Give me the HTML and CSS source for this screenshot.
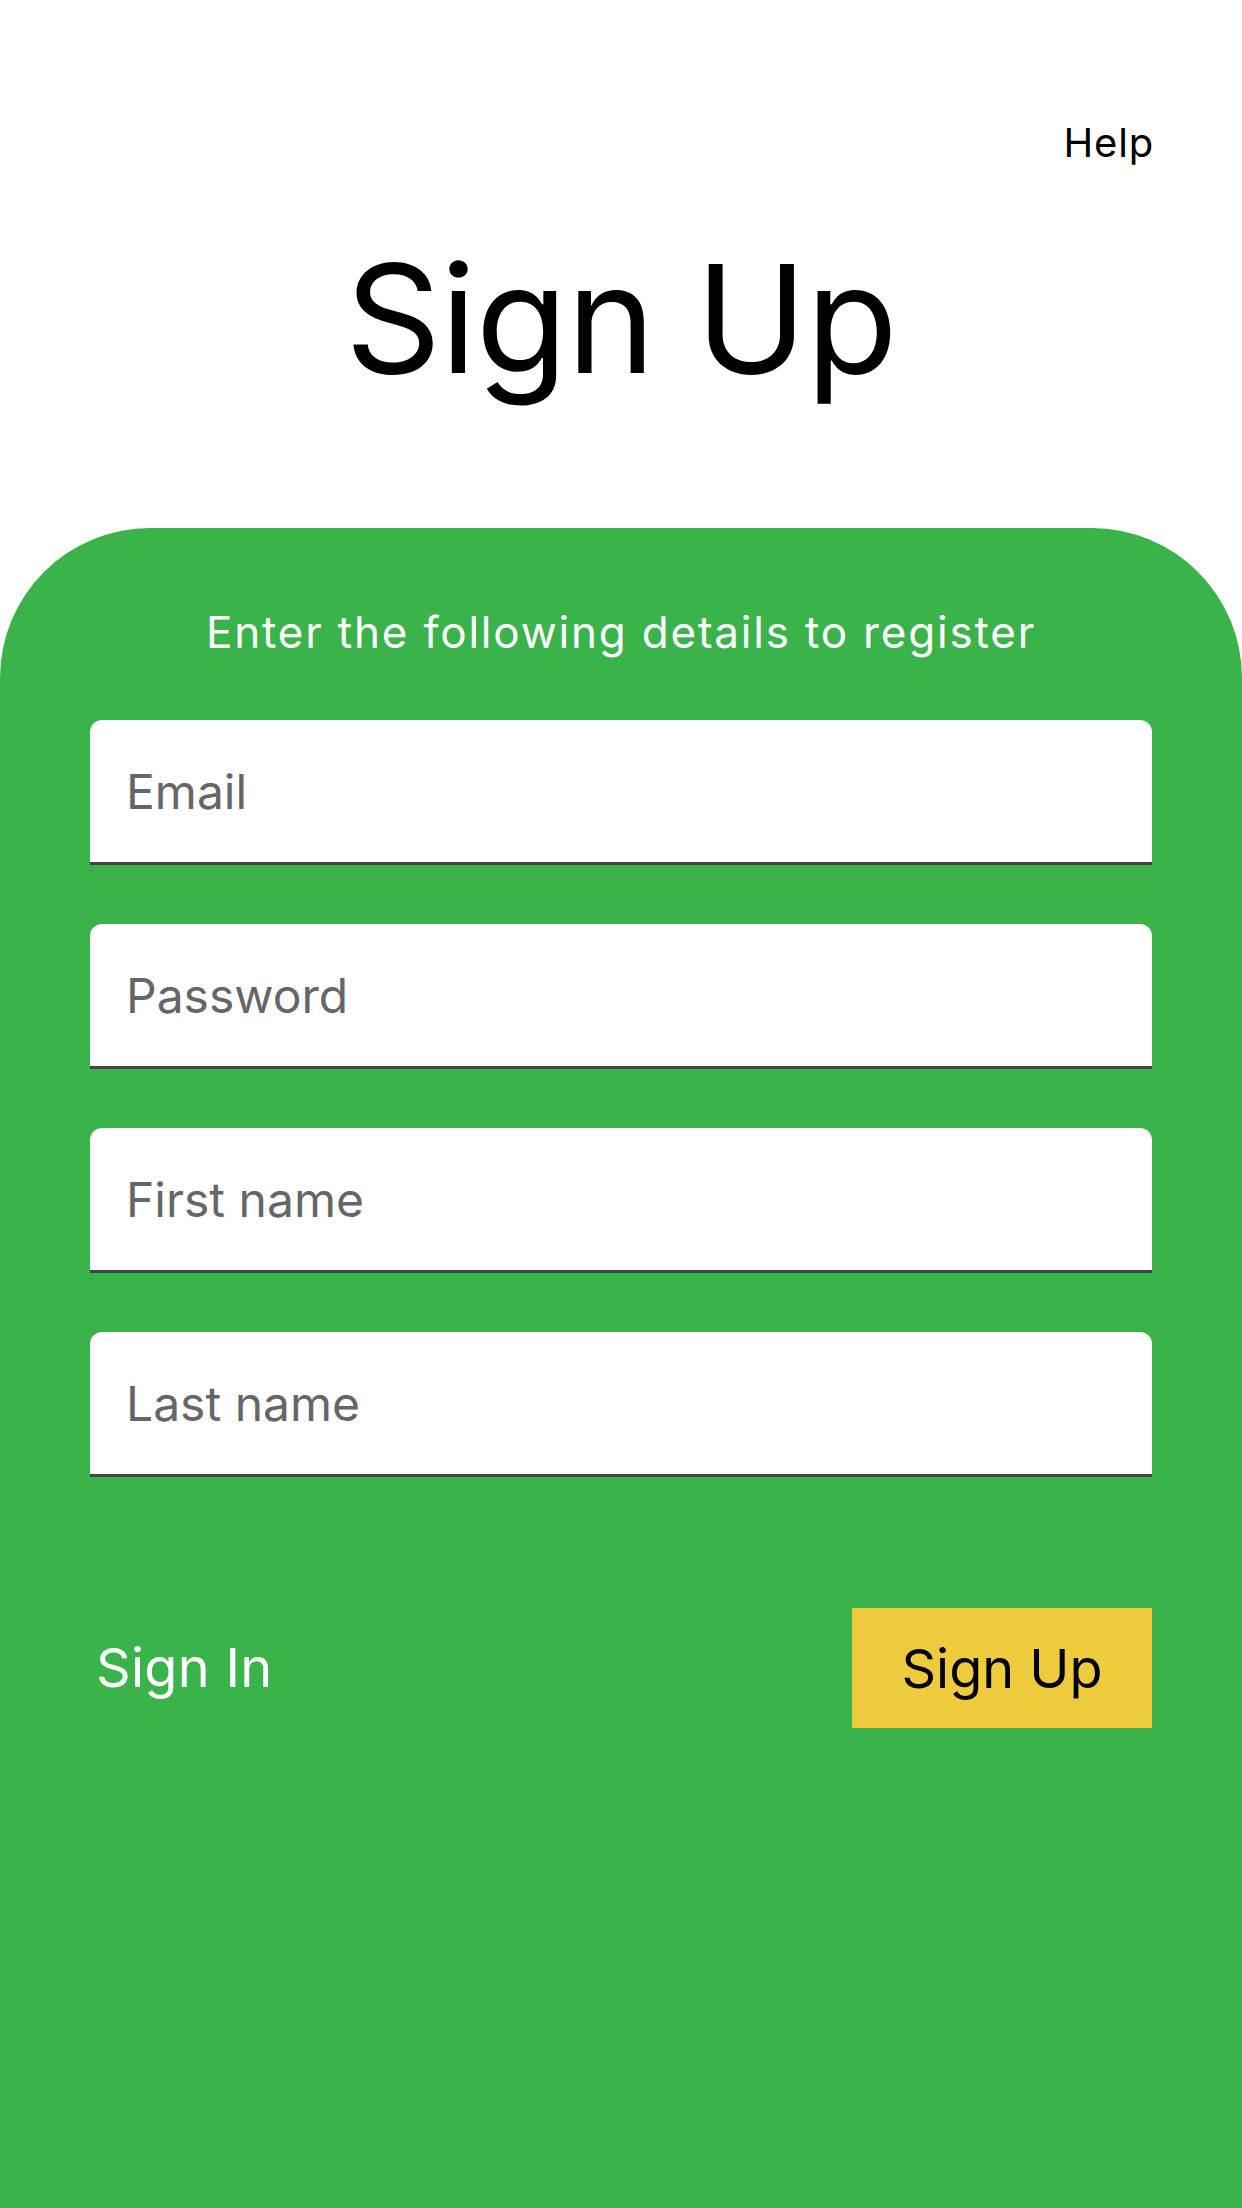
FILE: index.html
```html
<!DOCTYPE html>
<html lang="en">
<head>
<meta charset="utf-8">
<title>Sign Up</title>
<link rel="stylesheet" href="styles.css">
</head>
<body>
<div class="screen">
  <header class="topbar">
    <a class="help" href="#">Help</a>
  </header>
  <h1 class="title">Sign Up</h1>
  <main class="card">
    <p class="subtitle">Enter the following details to register</p>
    <form class="form">
      <input class="field" type="email" placeholder="Email">
      <input class="field" type="password" placeholder="Password">
      <input class="field" type="text" placeholder="First name">
      <input class="field" type="text" placeholder="Last name">
      <div class="actions">
        <a class="signin" href="#">Sign In</a>
        <button class="signup" type="button">Sign Up</button>
      </div>
    </form>
  </main>
</div>
</body>
</html>
```

FILE: styles.css
```css
* { box-sizing: border-box; }
html, body {
  margin: 0;
  padding: 0;
  background: #ffffff;
}
body {
  font-family: Inter, "Liberation Sans", Arial, sans-serif;
  color: #000;
}
.screen {
  width: 1242px;
  min-height: 2208px;
  display: flex;
  flex-direction: column;
}
.topbar {
  display: flex;
  justify-content: flex-end;
  padding: 119px 88px 0 88px;
}
.help {
  font-size: 40px;
  line-height: 48px;
  letter-spacing: 0.8px;
  color: #000;
  text-decoration: none;
}
.title {
  margin: 72px 0 0 0;
  font-size: 150px;
  line-height: 160px;
  font-weight: 400;
  text-align: center;
  letter-spacing: -1px;
}
.card {
  flex: 1;
  margin-top: 129px;
  background: #3ab44a;
  border-radius: 150px 150px 0 0;
  padding: 76px 90px 0 90px;
}
.subtitle {
  margin: 0;
  font-size: 44px;
  line-height: 56px;
  color: #ffffff;
  text-align: center;
  letter-spacing: 1.8px;
}
.form {
  margin-top: 60px;
  display: flex;
  flex-direction: column;
  gap: 59px;
}
.field {
  display: block;
  width: 100%;
  height: 145px;
  margin: 0;
  padding: 0 36px;
  border: 0;
  border-bottom: 3px solid #444444;
  border-radius: 12px 12px 0 0;
  background: #ffffff;
  font-family: Inter, "Liberation Sans", Arial, sans-serif;
  font-size: 48px;
  color: #222;
  outline: none;
}
.field::placeholder {
  color: #666666;
  opacity: 1;
}
.actions {
  margin-top: 72px;
  display: flex;
  justify-content: space-between;
  align-items: center;
}
.signin {
  margin-left: 6px;
  font-size: 54px;
  line-height: 64px;
  letter-spacing: 0.3px;
  color: #ffffff;
  text-decoration: none;
}
.signup {
  width: 300px;
  height: 120px;
  border: 0;
  border-radius: 0;
  background: #edcb3d;
  color: #000;
  font-family: Inter, "Liberation Sans", Arial, sans-serif;
  font-size: 54px;
  padding: 0;
}
```
